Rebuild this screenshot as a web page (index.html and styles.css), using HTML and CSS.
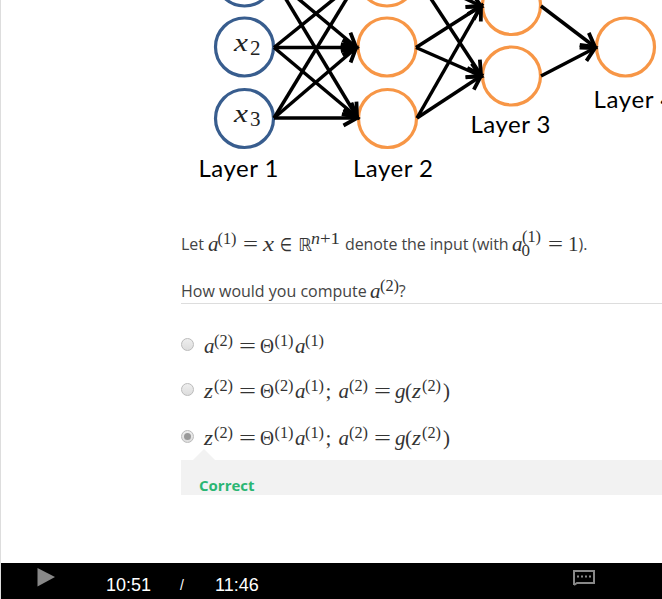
FILE: index.html
```html
<!DOCTYPE html>
<html lang="en">
<head>
<meta charset="utf-8">
<title>Neural network quiz</title>
<link rel="stylesheet" href="styles.css">
</head>
<body>
<main class="player">
  <section class="content">
    <svg class="network" viewBox="1 0 661 190" width="661" height="190">
      <defs>
        <marker id="head" markerUnits="userSpaceOnUse" markerWidth="22" markerHeight="22" refX="17" refY="11" orient="auto">
          <path d="M3.500 3.500L17 11L3.500 18.500" class="arrowhead"/>
        </marker>
      </defs>
      <g class="nodes input">
        <circle cx="244.500" cy="-23" r="29"/>
        <circle cx="244.500" cy="47" r="29"/>
        <circle cx="244.500" cy="118.500" r="29"/>
      </g>
      <g class="nodes hidden">
        <circle cx="387" cy="-23" r="29"/>
        <circle cx="387" cy="47" r="29"/>
        <circle cx="387.500" cy="118.500" r="29"/>
        <circle cx="511.500" cy="5.500" r="29"/>
        <circle cx="511.500" cy="76" r="29"/>
        <circle cx="625.500" cy="47" r="29"/>
      </g>
      <g class="edges">
        <path d="M271 -24L356 47"/>
        <path d="M272 -24L357 117"/>
        <path d="M274 47.500L360 -22"/>
        <path d="M274 47.500H356"/>
        <path d="M274 47.500L357 117"/>
        <path d="M274 118L360 -23"/>
        <path d="M274 118L356 48"/>
        <path d="M274 118H357"/>
        <path d="M417 -24L481 6"/>
        <path d="M416 -24L481 75"/>
        <path d="M416 47.500L481 6"/>
        <path d="M416 47.500L481 76"/>
        <path d="M417 118L481 6"/>
        <path d="M417 118L481 76"/>
        <path d="M541 6L595 47"/>
        <path d="M541 76L595 48"/>
      </g>
      <g class="node-names">
        <text x="234" y="51" textLength="14" lengthAdjust="spacingAndGlyphs">x</text><text class="index" x="250" y="55">2</text>
        <text x="234" y="122" textLength="14" lengthAdjust="spacingAndGlyphs">x</text><text class="index" x="250" y="126">3</text>
      </g>
      <g class="layer-names">
        <text x="198.500" y="177" textLength="80">Layer 1</text>
        <text x="353" y="177" textLength="80">Layer 2</text>
        <text x="470.500" y="133" textLength="80">Layer 3</text>
        <text x="593.500" y="108" textLength="81">Layer 4</text>
      </g>
    </svg>

    <div class="question">
      <p class="line intro">
        <span>Let</span>
        <svg class="math" width="133" height="36">
          <text class="v" x="0" y="25">a</text><text class="s" x="9.500" y="18" textLength="19" lengthAdjust="spacingAndGlyphs">(1)</text>
          <text x="35" y="25" textLength="15" lengthAdjust="spacingAndGlyphs">=</text><text class="v" x="55" y="25" textLength="11" lengthAdjust="spacingAndGlyphs">x</text>
          <text class="sym" x="72" y="25" textLength="12" lengthAdjust="spacingAndGlyphs">∈</text><text class="sym" x="90" y="25" textLength="14" lengthAdjust="spacingAndGlyphs">ℝ</text>
          <text class="s v" x="103" y="18" textLength="9" lengthAdjust="spacingAndGlyphs">n</text><text class="s" x="112" y="18" textLength="20" lengthAdjust="spacingAndGlyphs">+1</text>
        </svg>
        <span class="denote">denote the input (with</span>
        <svg class="math" width="66" height="36">
          <text class="v" x="-1" y="25">a</text><text class="s" x="9" y="15.500" textLength="19" lengthAdjust="spacingAndGlyphs">(1)</text><text class="s" x="8.500" y="30">0</text>
          <text x="35" y="25" textLength="15" lengthAdjust="spacingAndGlyphs">=</text><text x="55" y="25">1</text>
        </svg>
        <span>).</span>
      </p>
      <p class="line prompt">
        <span class="ask">How would you compute</span>
        <svg class="math" width="30" height="36">
          <text class="v" x="-1" y="25">a</text><text class="s" x="9" y="18" textLength="19" lengthAdjust="spacingAndGlyphs">(2)</text>
        </svg>
        <span>?</span>
      </p>
      <div class="options">
        <div class="option">
          <i class="radio"></i>
          <svg class="math" width="250" height="36">
            <text class="v" x="0" y="25">a</text><text class="s" x="10" y="18" textLength="19" lengthAdjust="spacingAndGlyphs">(2)</text>
            <text x="35" y="25" textLength="17" lengthAdjust="spacingAndGlyphs">=</text><text x="56" y="25" textLength="14" lengthAdjust="spacingAndGlyphs">Θ</text><text class="s" x="70.500" y="17.500" textLength="19" lengthAdjust="spacingAndGlyphs">(1)</text>
            <text class="v" x="91" y="25">a</text><text class="s" x="101" y="18" textLength="19" lengthAdjust="spacingAndGlyphs">(1)</text>
          </svg>
        </div>
        <div class="option">
          <i class="radio"></i>
          <svg class="math" width="250" height="36">
            <text class="v" x="0" y="25" textLength="9" lengthAdjust="spacingAndGlyphs">z</text><text class="s" x="10" y="18" textLength="19" lengthAdjust="spacingAndGlyphs">(2)</text>
            <text x="35" y="25" textLength="17" lengthAdjust="spacingAndGlyphs">=</text><text x="56" y="25" textLength="14" lengthAdjust="spacingAndGlyphs">Θ</text><text class="s" x="70.500" y="17.500" textLength="19" lengthAdjust="spacingAndGlyphs">(2)</text>
            <text class="v" x="91" y="25">a</text><text class="s" x="101" y="18" textLength="19" lengthAdjust="spacingAndGlyphs">(1)</text><text x="121.500" y="25">;</text>
            <text class="v" x="134.500" y="25">a</text><text class="s" x="145" y="18" textLength="19" lengthAdjust="spacingAndGlyphs">(2)</text>
            <text x="170" y="25" textLength="17" lengthAdjust="spacingAndGlyphs">=</text><text class="v" x="191" y="25">g</text><text x="201" y="25">(</text>
            <text class="v" x="208" y="25" textLength="9" lengthAdjust="spacingAndGlyphs">z</text><text class="s" x="218" y="18" textLength="19" lengthAdjust="spacingAndGlyphs">(2)</text><text x="239" y="25">)</text>
          </svg>
        </div>
        <div class="option last">
          <i class="radio checked"></i>
          <svg class="math" width="250" height="36">
            <text class="v" x="0" y="25" textLength="9" lengthAdjust="spacingAndGlyphs">z</text><text class="s" x="10" y="18" textLength="19" lengthAdjust="spacingAndGlyphs">(2)</text>
            <text x="35" y="25" textLength="17" lengthAdjust="spacingAndGlyphs">=</text><text x="56" y="25" textLength="14" lengthAdjust="spacingAndGlyphs">Θ</text><text class="s" x="70.500" y="17.500" textLength="19" lengthAdjust="spacingAndGlyphs">(1)</text>
            <text class="v" x="91" y="25">a</text><text class="s" x="101" y="18" textLength="19" lengthAdjust="spacingAndGlyphs">(1)</text><text x="121.500" y="25">;</text>
            <text class="v" x="134.500" y="25">a</text><text class="s" x="145" y="18" textLength="19" lengthAdjust="spacingAndGlyphs">(2)</text>
            <text x="170" y="25" textLength="17" lengthAdjust="spacingAndGlyphs">=</text><text class="v" x="191" y="25">g</text><text x="201" y="25">(</text>
            <text class="v" x="208" y="25" textLength="9" lengthAdjust="spacingAndGlyphs">z</text><text class="s" x="218" y="18" textLength="19" lengthAdjust="spacingAndGlyphs">(2)</text><text x="239" y="25">)</text>
          </svg>
        </div>
      </div>
      <div class="feedback">Correct</div>
    </div>
  </section>

  <footer class="controls">
    <svg class="play" width="18" height="19" viewBox="0 0 18 19"><path d="M0.500 0L18 9L0.500 18.500Z"/></svg>
    <span class="elapsed">10:51</span>
    <span class="slash">/</span>
    <span class="total">11:46</span>
    <svg class="captions" width="22" height="16" viewBox="0 0 22 16">
      <path class="bubble" d="M1 15V1H21V13H4L1 15"/>
      <path class="dots" d="M4 6.500H19"/>
    </svg>
  </footer>
</main>
</body>
</html>
```
FILE: styles.css
```css
* { box-sizing: border-box; }
body { margin: 0; background: #fff; overflow: hidden; }
.player {
  display: flex;
  flex-direction: column;
  width: 662px;
  height: 599px;
  border-left: 1px solid #ddd;
  overflow: hidden;
}
.content { height: 563px; }
.network { display: block; }
.nodes { fill: #fff; stroke-width: 3.2; }
.input { stroke: #385d8e; }
.hidden { stroke: #f79646; }
.edges { fill: none; stroke: #000; stroke-width: 3.5; }
.edges path { marker-end: url(#head); }
.arrowhead { fill: none; stroke: #000; stroke-width: 3.8; }
.node-names { font: italic 25px "Liberation Serif", serif; fill: #222; }
.node-names .index { font-style: normal; font-size: 21px; }
.layer-names { font: 24px Lato, sans-serif; fill: #000; }

.question {
  margin-left: 180px;
  font-family: "Open Sans", sans-serif;
  font-size: 16px;
  color: #444;
}
.line {
  display: flex;
  align-items: center;
  height: 36px;
  margin: 0;
  white-space: nowrap;
}
.intro { margin-top: 36px; }
.intro .math { margin-left: 4px; }
.denote { margin-left: 4px; letter-spacing: -0.1px; }
.prompt {
  height: 37px;
  margin-top: 5px;
  margin-bottom: 22px;
  padding-top: 12px;
  border-bottom: 1px solid #ddd;
}
.prompt .math { margin-left: 4px; }
.prompt span:last-child { margin-left: -2px; }
.math {
  flex: none;
  overflow: visible;
  font: 21px "Liberation Serif", serif;
  fill: #333;
}
.math .v { font-style: italic; }
.math .s { font-size: 17px; }
.math .sym { font-family: "DejaVu Sans", sans-serif; font-size: 18px; }
.option {
  display: flex;
  align-items: center;
  height: 36px;
  margin-bottom: 9px;
}
.option .math { margin-top: 4px; }
.option.last { margin-top: 11px; margin-bottom: 6px; }
.radio {
  display: flex;
  align-items: center;
  justify-content: center;
  width: 13px;
  height: 13px;
  margin-right: 10px;
  border: 1px solid #bbb;
  border-radius: 50%;
  background: linear-gradient(#eee, #ddd);
}
.checked::after {
  content: "";
  width: 7px;
  height: 7px;
  border-radius: 50%;
  background: #999;
}
.feedback {
  position: relative;
  height: 35px;
  padding: 14px 18px 0;
  background: #f2f2f2;
  color: #2bb673;
  font-size: 15px;
  font-weight: 700;
  line-height: 22px;
}
.feedback::before {
  content: "";
  position: absolute;
  left: 12px;
  top: -11px;
  border: 11px solid transparent;
  border-top: 0;
  border-bottom-color: #f2f2f2;
}
.controls {
  display: flex;
  align-items: flex-start;
  height: 36px;
  background: #000;
  color: #fff;
  font: 18px/20px "Liberation Sans", sans-serif;
}
.play { margin: 5px 0 0 36px; fill: #888; }
.elapsed { width: 74px; margin: 12px 0 0 51px; }
.slash { width: 35px; margin-top: 12px; font-size: 14px; }
.total { margin-top: 12px; }
.captions { margin: 7px 67px 0 auto; fill: none; stroke: #888; stroke-width: 2; }
.dots { stroke-dasharray: 2 2; }
```
